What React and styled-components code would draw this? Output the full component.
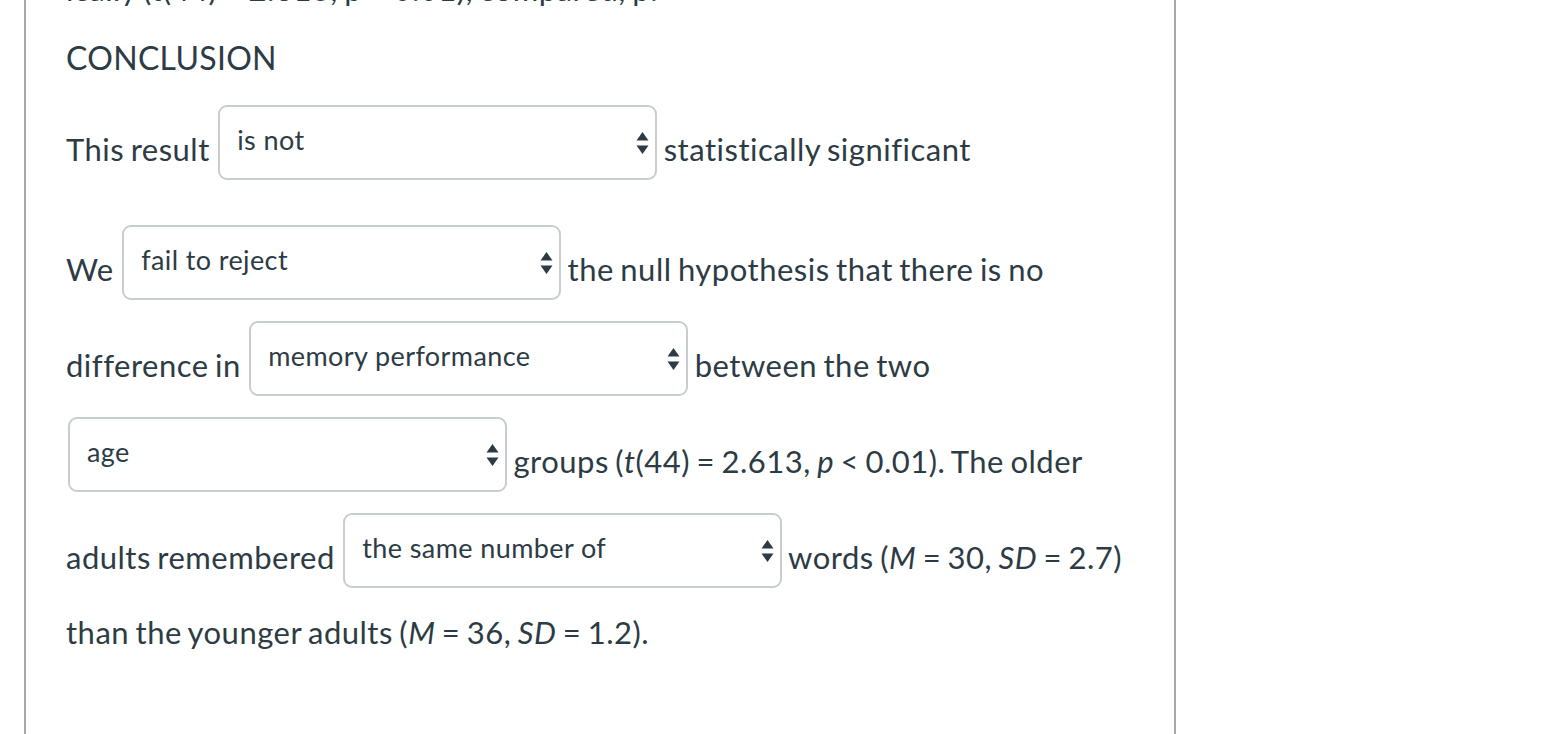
import styled, { createGlobalStyle } from 'styled-components'

const GlobalStyle = createGlobalStyle`
  html, body {
    margin: 0;
    padding: 0;
    background: #ffffff;
    overflow: hidden;
  }
  body {
    font-family: Lato, "Open Sans", "Liberation Sans", sans-serif;
    color: #2d3b45;
  }
`

const Page = styled.div`
  height: 734px;
  overflow: hidden;
`

const Card = styled.div`
  margin: -33px 0 0 24px;
  width: 1152px;
  min-height: 800px;
  border-left: 2px solid #a8a8a8;
  border-right: 2px solid #a8a8a8;
  padding: 0 40px;
  box-sizing: border-box;
`

const Prev = styled.p`
  margin: 0;
  font-size: 31px;
  letter-spacing: 0.5px;
  word-spacing: -2px;
  line-height: 44px;
  white-space: nowrap;
`

const Heading = styled.h3`
  margin: 27px 0 27px;
  font-size: 32px;
  line-height: 40px;
  font-weight: 400;
  letter-spacing: 0.3px;
`

const Para = styled.p`
  margin: 0 0 24px;
  font-size: 31px;
  letter-spacing: 0.5px;
  word-spacing: -2px;
  line-height: 47px;

  i {
    font-style: italic;
  }
`

const DropWrap = styled.span`
  position: relative;
  display: inline-block;
  vertical-align: middle;
  margin: 0 0 21px 2px;
  letter-spacing: 0;
  word-spacing: 0;
`

const Select = styled.select`
  appearance: none;
  -webkit-appearance: none;
  display: block;
  width: 439px;
  height: 75px;
  margin: 0;
  padding: 0 40px 6px 17px;
  border: 2px solid #c7cdd1;
  border-radius: 9px;
  background: #ffffff;
  font-family: Lato, "Open Sans", "Liberation Sans", sans-serif;
  font-size: 27px;
  letter-spacing: 0.4px;
  color: #2d3b45;
  box-sizing: border-box;
  outline: none;
`

const Arrows = styled.svg`
  position: absolute;
  right: 8px;
  top: 50%;
  transform: translateY(-50%);
  pointer-events: none;
`

const Dropdown = ({ value }) => (
  <DropWrap>
    <Select defaultValue={value}>
      <option value={value}>{value}</option>
    </Select>
    <Arrows width="13" height="24" viewBox="0 0 13 24">
      <path d="M6.5 1 L12.5 9.5 L0.5 9.5 Z" fill="#2d3b45" />
      <path d="M0.5 14.5 L12.5 14.5 L6.5 23 Z" fill="#2d3b45" />
    </Arrows>
  </DropWrap>
)

const App = () => {
  return (
    <Page>
      <GlobalStyle />
      <Card>
        <Prev>
          ically (t(44) = 2.613, p &lt; 0.01), compared, p.
        </Prev>
        <Heading>CONCLUSION</Heading>
        <Para>
          This result <Dropdown value="is not" /> statistically significant
        </Para>
        <Para>
          We <Dropdown value="fail to reject" /> the null hypothesis that there is no difference in{' '}
          <Dropdown value="memory performance" /> between the two <Dropdown value="age" /> groups
          (<i>t</i>(44) = 2.613, <i>p</i> &lt; 0.01). The older adults remembered{' '}
          <Dropdown value="the same number of" /> words (<i>M</i> = 30, <i>SD</i> = 2.7) than the
          younger adults (<i>M</i> = 36, <i>SD</i> = 1.2).
        </Para>
      </Card>
    </Page>
  )
}

export default App
